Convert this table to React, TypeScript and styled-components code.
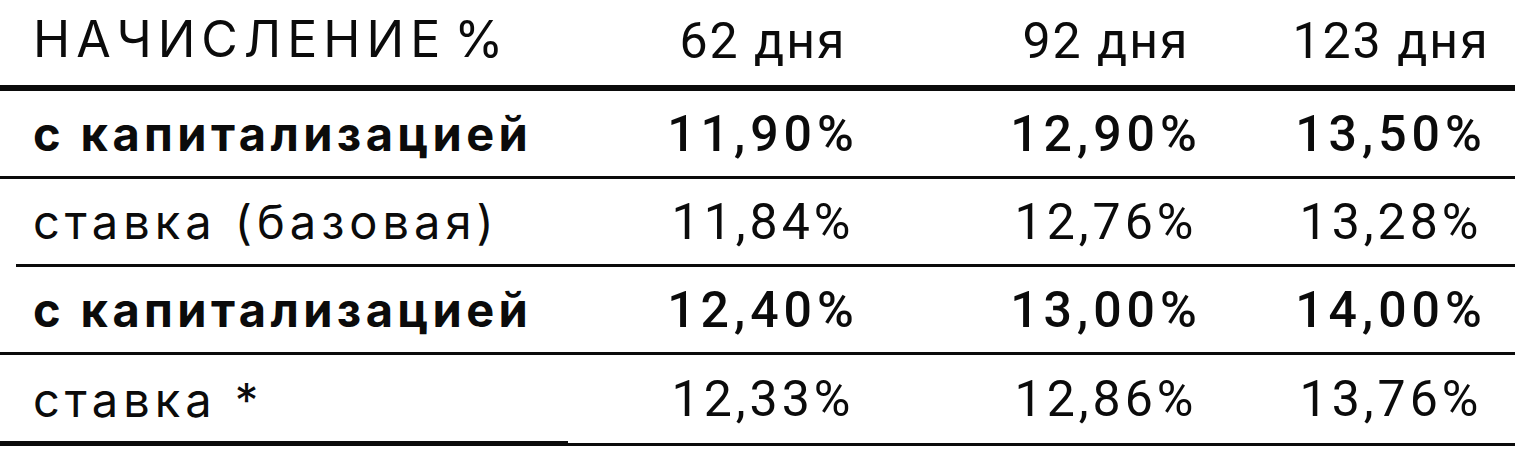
import React from 'react';
import styled, { createGlobalStyle } from 'styled-components';

const GlobalStyle = createGlobalStyle`
  html, body {
    margin: 0;
    padding: 0;
    background: #ffffff;
  }
`;

const Table = styled.div`
  position: relative;
  width: 1515px;
  color: #0b0b0b;
  border-bottom: 3px solid #0b0b0b;

  &::after {
    content: '';
    position: absolute;
    left: 0;
    bottom: -3px;
    width: 568px;
    height: 5px;
    background: #0b0b0b;
  }
`;

const Row = styled.div<{ $inset: number; $height: number; $line: number }>`
  display: grid;
  grid-template-columns: ${p => 581 - p.$inset}px 364px 322px 1fr;
  align-items: center;
  height: ${p => p.$height}px;
  margin-left: ${p => p.$inset}px;
  border-bottom: ${p => p.$line}px solid #0b0b0b;

  &:last-child {
    border-bottom: none;
  }
`;

const HeadLabel = styled.div<{ $inset: number }>`
  padding-left: ${p => 33 - p.$inset}px;
  margin-top: -8px;
  font-family: Inter, 'Noto Sans', sans-serif;
  font-size: 50px;
  font-weight: 400;
  letter-spacing: 6px;
  word-spacing: -12px;
  white-space: nowrap;
`;

const Label = styled.div<{ $inset: number; $bold: boolean }>`
  padding-left: ${p => 33 - p.$inset}px;
  font-family: Inter, 'Noto Sans', sans-serif;
  font-size: 47px;
  font-weight: ${p => (p.$bold ? 700 : 400)};
  letter-spacing: ${p => (p.$bold ? 4.4 : 5)}px;
  white-space: nowrap;
`;

const Cell = styled.div<{ $bold: boolean; $head?: boolean }>`
  text-align: center;
  margin-top: ${p => (p.$head ? -4 : 0)}px;
  font-family: Roboto, 'Liberation Sans', sans-serif;
  font-size: 50px;
  font-weight: ${p => (p.$bold ? 500 : 400)};
  letter-spacing: ${p => (p.$bold ? 5 : p.$head ? 2 : 4)}px;
  white-space: nowrap;
`;

const days = ['62 дня', '92 дня', '123 дня'];

const rows = [
  { label: 'с капитализацией', bold: true, inset: 0, height: 85, line: 3, values: ['11,90%', '12,90%', '13,50%'] },
  { label: 'ставка (базовая)', bold: false, inset: 16, height: 85, line: 3, values: ['11,84%', '12,76%', '13,28%'] },
  { label: 'с капитализацией', bold: true, inset: 0, height: 85, line: 3, values: ['12,40%', '13,00%', '14,00%'] },
  { label: 'ставка *', bold: false, inset: 16, height: 88, line: 0, values: ['12,33%', '12,86%', '13,76%'] },
];

const App: React.FC = () => {
  return (
    <>
      <GlobalStyle />
      <Table>
        <Row $inset={0} $height={85} $line={6}>
          <HeadLabel $inset={0}>НАЧИСЛЕНИЕ %</HeadLabel>
          {days.map(d => (
            <Cell key={d} $bold={false} $head>{d}</Cell>
          ))}
        </Row>
        {rows.map((row, i) => (
          <Row key={i} $inset={row.inset} $height={row.height} $line={row.line}>
            <Label $inset={row.inset} $bold={row.bold}>{row.label}</Label>
            {row.values.map(v => (
              <Cell key={v} $bold={row.bold}>{v}</Cell>
            ))}
          </Row>
        ))}
      </Table>
    </>
  );
};

export default App;
